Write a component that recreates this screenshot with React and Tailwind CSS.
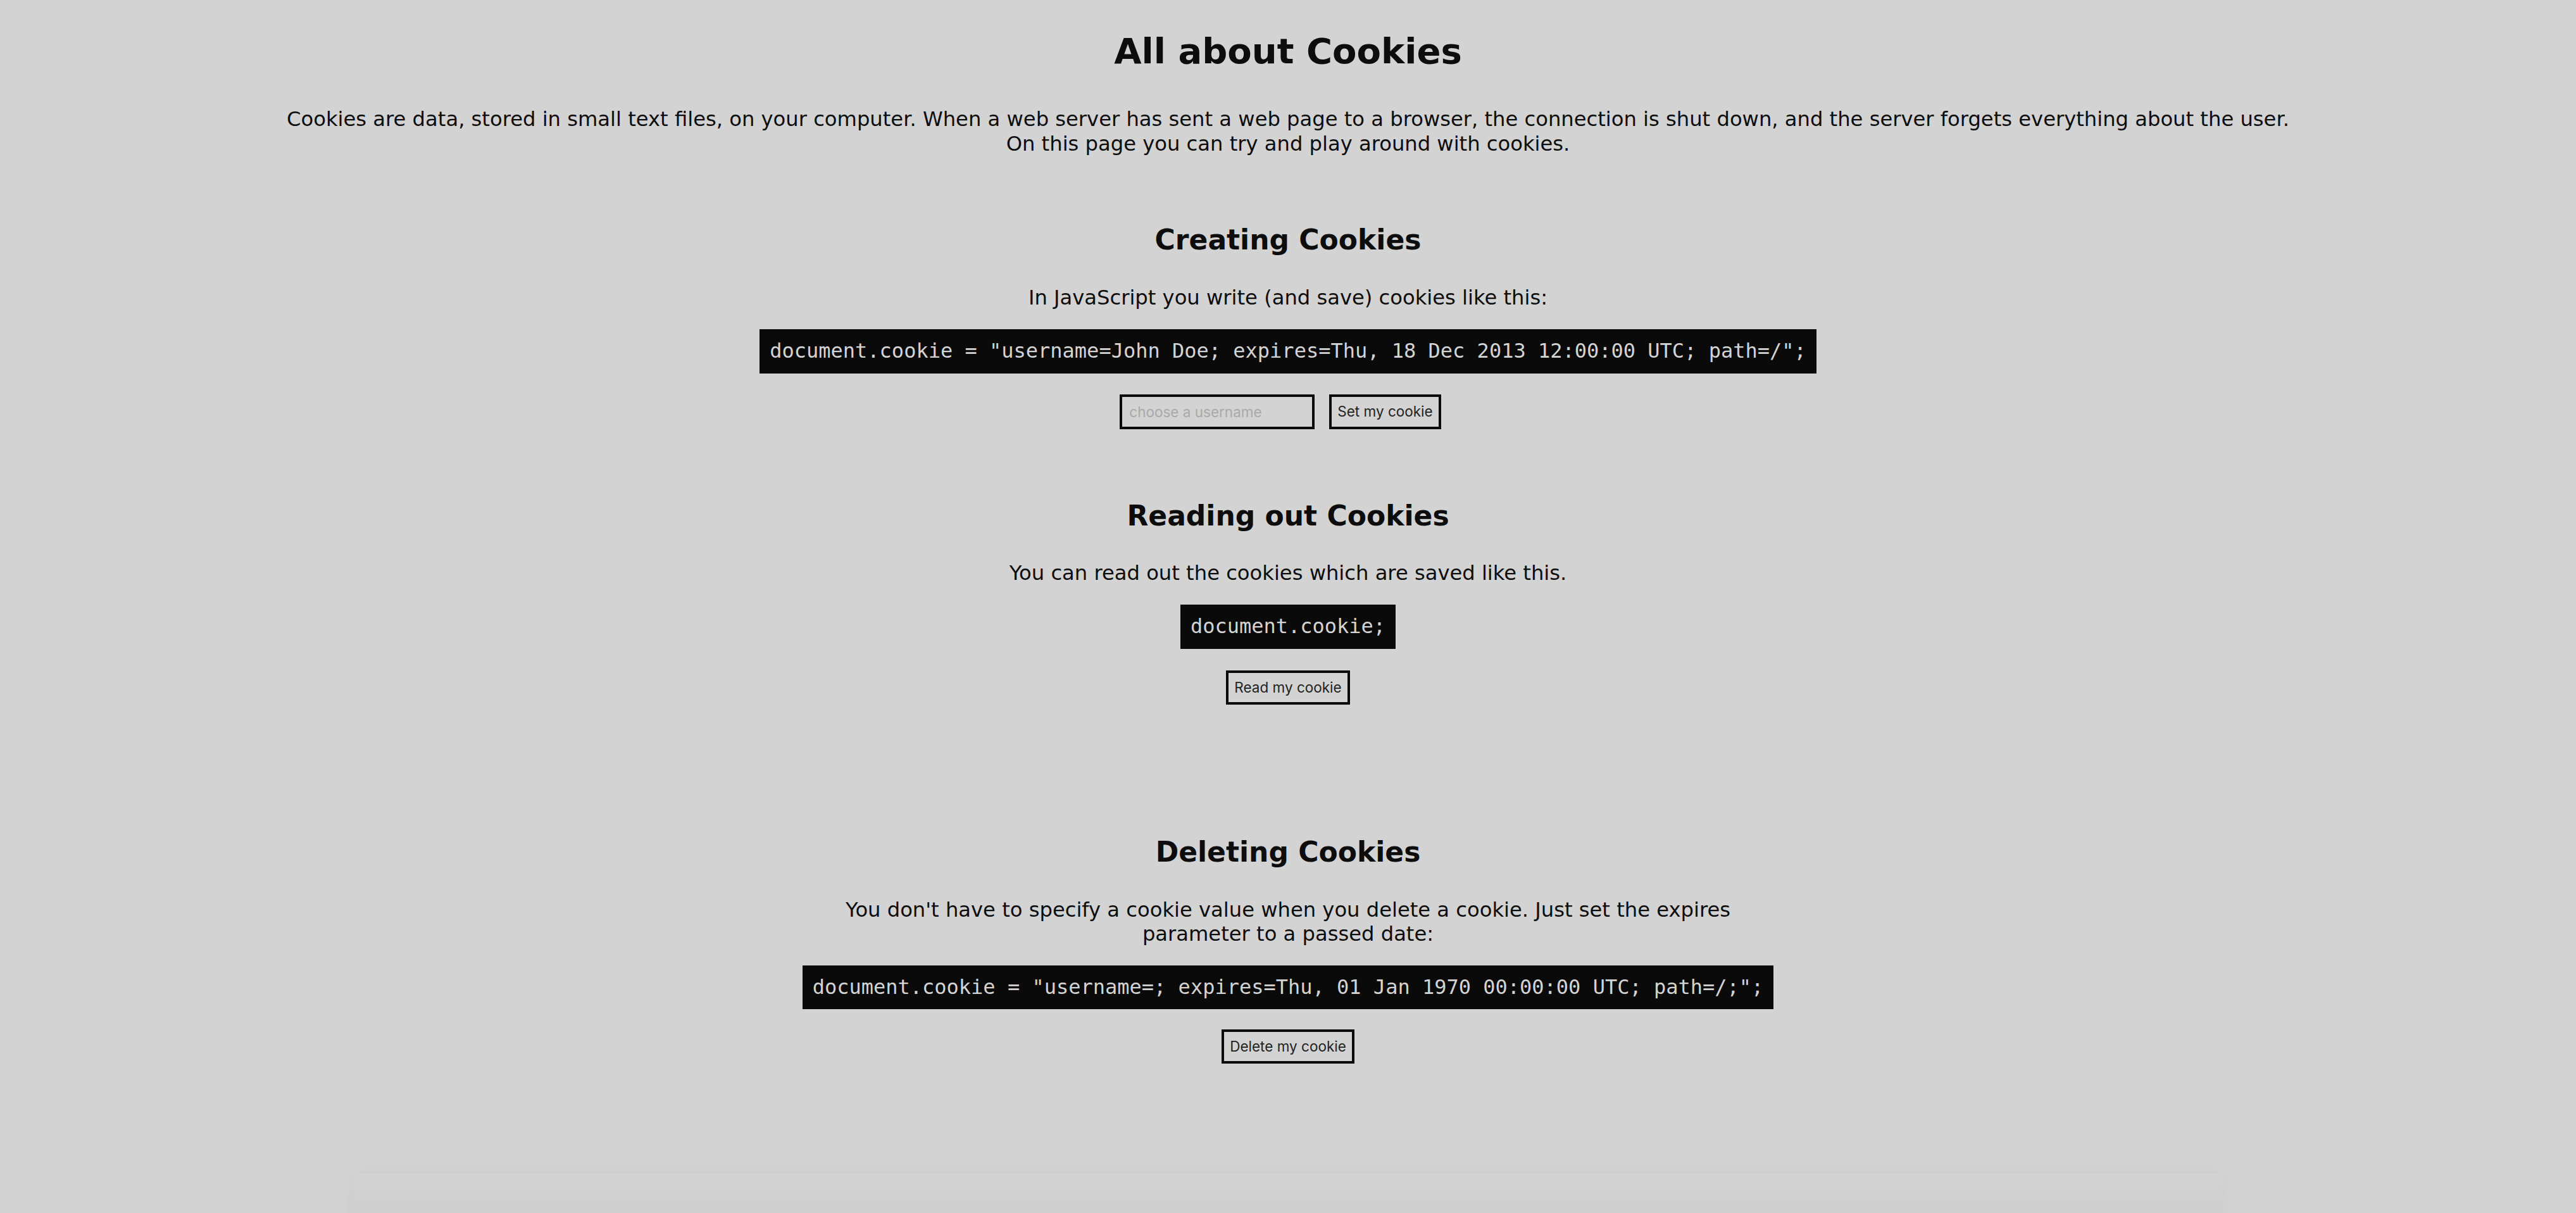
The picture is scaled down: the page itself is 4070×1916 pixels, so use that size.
import React, { useState } from "react";

const codeCls =
    "inline-block bg-[#0b0a0a] px-[16px] py-[16px] font-['DejaVu_Sans_Mono',monospace] text-[32px] leading-[1.164] text-[#d3d3d3] whitespace-pre";
const btnCls =
    "h-[54px] border-4 border-[#0b0b0b] bg-transparent px-[9px] font-['Inter',sans-serif] text-[22.5px] text-[#222]";
const textCls = "text-[32.2px] leading-[1.2]";
const h2Cls = "text-[44px] font-bold leading-[1.164]";

export default function App() {
    const [username, setUsername] = useState("");

    return (
        <div className="h-[1916px] overflow-hidden bg-[#d3d3d3] text-center text-[#0d0d0d] font-['DejaVu_Sans',sans-serif]">
            <h1 className="pt-[48px] text-[56px] font-bold leading-[1.164]">
                All about Cookies
            </h1>
            <p className={"mt-[56px] " + textCls}>
                Cookies are data, stored in small text files, on your
                computer. When a web server has sent a web page to a browser,
                the connection is shut down, and the server forgets everything
                about the user.
                <br />
                On this page you can try and play around with cookies.
            </p>

            {/* creating */}
            <section className="mt-[107px]">
                <h2 className={h2Cls}>Creating Cookies</h2>
                <p className={"mt-[46px] " + textCls}>
                    In JavaScript you write (and save) cookies like this:
                </p>
                <div className="mt-[31px]">
                    <code className={codeCls}>
                        document.cookie = "username=John Doe; expires=Thu, 18
                        Dec 2013 12:00:00 UTC; path=/";
                    </code>
                </div>
                <div className="mt-[33px] flex justify-center gap-[23px] pr-[24px]">
                    <input
                        type="text"
                        value={username}
                        onChange={(e) => setUsername(e.target.value)}
                        placeholder="choose a username"
                        className="h-[55px] w-[308px] border-4 border-[#0b0b0b] bg-transparent px-[11px] font-['Inter',sans-serif] text-[22.5px] text-[#222] placeholder:text-[#a9a9a9] outline-none"
                    />
                    <button className={btnCls + " h-[55px]"}>Set my cookie</button>
                </div>
            </section>

            {/* reading */}
            <section className="mt-[111px]">
                <h2 className={h2Cls}>Reading out Cookies</h2>
                <p className={"mt-[46px] " + textCls}>
                    You can read out the cookies which are saved like this.
                </p>
                <div className="mt-[31px]">
                    <code className={codeCls}>document.cookie;</code>
                </div>
                <div className="mt-[34px] flex justify-center">
                    <button className={btnCls}>Read my cookie</button>
                </div>
            </section>

            {/* deleting */}
            <section className="mt-[207px]">
                <h2 className={h2Cls}>Deleting Cookies</h2>
                <p className={"mx-auto mt-[47px] max-w-[1490px] " + textCls}>
                    You don't have to specify a cookie value when you delete a
                    cookie. Just set the expires parameter to a passed date:
                </p>
                <div className="mt-[30px]">
                    <code className={codeCls}>
                        document.cookie = "username=; expires=Thu, 01 Jan 1970
                        00:00:00 UTC; path=/;";
                    </code>
                </div>
                <div className="mt-[32px] flex justify-center">
                    <button className={btnCls}>Delete my cookie</button>
                </div>
            </section>

            <div className="mx-auto mt-[174px] h-[200px] w-[2951px] bg-gradient-to-b from-[#d3d3d3] to-[#c3c3c3] shadow-[0_0_30px_rgba(0,0,0,0.04)]" />
        </div>
    );
}
